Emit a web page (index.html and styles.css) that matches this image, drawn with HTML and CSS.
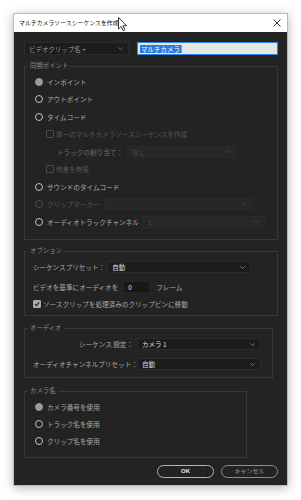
FILE: index.html
```html
<!DOCTYPE html>
<html lang="ja">
<head>
<meta charset="utf-8">
<link rel="stylesheet" href="styles.css">
</head>
<body>
<div class="dialog">
  <div class="titlebar">
    <span class="title">マルチカメラソースシーケンスを作成</span>
    <svg class="close" width="8" height="8" viewBox="0 0 8 8"><path d="M0.5 0.5L7.5 7.5M7.5 0.5L0.5 7.5" stroke="#333" stroke-width="1"/></svg>
    <svg class="cursor" width="10" height="15" viewBox="0 0 10 15"><path d="M0.5 0.5V12L3.2 9.4L5 13.6L6.8 12.8L5 8.8H8.6Z" fill="#fff" stroke="#222" stroke-width="0.9" stroke-linejoin="round"/></svg>
  </div>
  <div class="body">
    <div class="toprow">
      <div class="select select-name"><span>ビデオクリップ名 +</span><svg class="chev" width="5" height="3" viewBox="0 0 5 3"><path d="M0.3 0.3L2.5 2.5L4.7 0.3" fill="none" stroke="#777" stroke-width="0.8"/></svg></div>
      <div class="textinput"><span class="sel">マルチカメラ</span><span class="caret"></span></div>
    </div>

    <fieldset class="group g1">
      <legend>同期ポイント</legend>
      <div class="gbody">
        <div class="row r175"><span class="radio filled"></span><span class="lbl">インポイント</span></div>
        <div class="row r175"><span class="radio"></span><span class="lbl">アウトポイント</span></div>
        <div class="row r175"><span class="radio"></span><span class="lbl">タイムコード</span></div>
        <div class="row r175 ind1"><span class="check dis"></span><span class="lbl dim">単一のマルチカメラソースシーケンスを作成</span></div>
        <div class="row r175 ind2"><span class="lbl mid">トラックの割り当て：</span><div class="select dsel w-track"><span>なし</span><svg class="chev" width="5" height="3" viewBox="0 0 5 3"><path d="M0.3 0.3L2.5 2.5L4.7 0.3" fill="none" stroke="#4a4a4a" stroke-width="0.8"/></svg></div></div>
        <div class="row r175 ind1"><span class="check dis"></span><span class="lbl dim">時差を無視</span></div>
        <div class="row r175"><span class="radio"></span><span class="lbl">サウンドのタイムコード</span></div>
        <div class="row r175"><span class="radio dis"></span><span class="lbl dim">クリップマーカー</span><div class="select dsel w-marker"><span></span><svg class="chev" width="5" height="3" viewBox="0 0 5 3"><path d="M0.3 0.3L2.5 2.5L4.7 0.3" fill="none" stroke="#4a4a4a" stroke-width="0.8"/></svg></div></div>
        <div class="row r175"><span class="radio"></span><span class="lbl">オーディオトラックチャンネル</span><div class="select dsel w-chan"><span>1</span><svg class="chev" width="5" height="3" viewBox="0 0 5 3"><path d="M0.3 0.3L2.5 2.5L4.7 0.3" fill="none" stroke="#4a4a4a" stroke-width="0.8"/></svg></div></div>
      </div>
    </fieldset>

    <fieldset class="group g2">
      <legend>オプション</legend>
      <div class="gbody">
        <div class="row h18"><span class="lbl">シーケンスプリセット：</span><div class="select esel w-preset"><span>自動</span><svg class="chev" width="5" height="3" viewBox="0 0 5 3"><path d="M0.3 0.3L2.5 2.5L4.7 0.3" fill="none" stroke="#888" stroke-width="0.8"/></svg></div></div>
        <div class="row h22"><span class="lbl">ビデオを基準にオーディオを</span><div class="numinput">0</div><span class="lbl frame">フレーム</span></div>
        <div class="row h12"><span class="check on"><svg width="7" height="6" viewBox="0 0 7 6"><path d="M1 3.2L2.8 5L6 1" fill="none" stroke="#222" stroke-width="1.3"/></svg></span><span class="lbl">ソースクリップを処理済みのクリップビンに移動</span></div>
      </div>
    </fieldset>

    <fieldset class="group g3">
      <legend>オーディオ</legend>
      <div class="gbody">
        <div class="row h14"><span class="lbl rlbl">シーケンス 設定：</span><div class="select esel w-audio"><span>カメラ 1</span><svg class="chev" width="5" height="3" viewBox="0 0 5 3"><path d="M0.3 0.3L2.5 2.5L4.7 0.3" fill="none" stroke="#888" stroke-width="0.8"/></svg></div></div>
        <div class="row h14 second"><span class="lbl rlbl">オーディオチャンネルプリセット：</span><div class="select esel w-audio"><span>自動</span><svg class="chev" width="5" height="3" viewBox="0 0 5 3"><path d="M0.3 0.3L2.5 2.5L4.7 0.3" fill="none" stroke="#888" stroke-width="0.8"/></svg></div></div>
      </div>
    </fieldset>

    <fieldset class="group g4">
      <legend>カメラ名</legend>
      <div class="gbody">
        <div class="row h17"><span class="radio filled"></span><span class="lbl">カメラ番号を使用</span></div>
        <div class="row h17"><span class="radio"></span><span class="lbl">トラック名を使用</span></div>
        <div class="row h17"><span class="radio"></span><span class="lbl">クリップ名を使用</span></div>
      </div>
    </fieldset>

    <div class="buttons">
      <div class="btn ok">OK</div>
      <div class="btn cancel">キャンセル</div>
    </div>
  </div>
</div>
</body>
</html>
```

FILE: styles.css
```css
* { box-sizing: border-box; }
html, body { margin: 0; padding: 0; }
body {
  width: 301px;
  height: 500px;
  background: #ffffff;
  font-family: "Noto Sans CJK JP", "Noto Sans", sans-serif;
  overflow: hidden;
}
.dialog {
  margin: 13px 0 0 13px;
  width: 275px;
  height: 473px;
  background: #232323;
  border: 1px solid #b9b9b9;
  box-shadow: 0 2px 10px rgba(0,0,0,0.28);
  display: flex;
  flex-direction: column;
}
.titlebar {
  position: relative;
  height: 18px;
  background: #ffffff;
  display: flex;
  align-items: center;
  padding-left: 5px;
  flex: none;
}
.title {
  font-size: 5.9px;
  color: #111;
  line-height: 8px;
}
.close {
  margin-left: auto;
  margin-right: 6px;
}
.cursor {
  position: absolute;
  left: 104px;
  top: 3px;
}
.body {
  flex: 1;
  display: flex;
  flex-direction: column;
  padding: 10px 9px 0 10px;
}
.toprow {
  display: flex;
  height: 13px;
  gap: 8px;
}
.select {
  display: flex;
  align-items: center;
  height: 12px;
  padding: 0 5px 0 4px;
  background: #1c1c1c;
  border: 1px solid #2b2b2b;
  font-size: 6.5px;
  line-height: 8px;
  color: #9a9a9a;
}
.select span { flex: 1; white-space: nowrap; }
.select .chev { flex: none; }
.select-name { width: 105px; height: 13px; }
.textinput {
  width: 141px;
  height: 13px;
  background: #e6e6e6;
  border: 1px solid #2c86e8;
  display: flex;
  align-items: center;
  padding-left: 2px;
  font-size: 6.5px;
  line-height: 8px;
}
.sel {
  background: #2e7ad9;
  color: #fff;
  padding: 0 1px;
}
.caret {
  width: 1px;
  height: 8px;
  background: #e08a3a;
}
.group {
  margin: 0;
  padding: 0;
  border: 1px solid #383838;
  min-width: 0;
}
.group legend {
  font-size: 6.4px;
  line-height: 8px;
  color: #8a8a8a;
  padding: 0 2px;
  margin-left: 3px;
}
.g1 { margin-top: 7px; width: 254px; }
.g1 .gbody { padding: 3px 0 8.5px 10px; }
.g2 { margin-top: 7px; width: 254px; }
.g2 .gbody { padding: 3px 0 5px 8px; }
.g3 { margin-top: 8px; width: 249px; }
.g3 .gbody { padding: 5px 0 6px 8px; }
.g4 { margin-top: 9px; width: 223px; }
.g4 .gbody { padding: 3.5px 0 7px 10px; }
.row {
  display: flex;
  align-items: center;
  font-size: 6.6px;
  line-height: 8px;
}
.r175 { height: 17.5px; }
.h18 { height: 18px; }
.h22 { height: 22px; }
.h12 { height: 12px; }
.h14 { height: 14px; }
.h17 { height: 17px; }
.g3 .second { margin-top: 6px; }
.ind1 { padding-left: 11px; }
.ind2 { padding-left: 22px; }
.lbl { color: #ababab; white-space: nowrap; }
.lbl.dim { color: #555; }
.lbl.mid { color: #6e6e6e; }
.radio {
  width: 8px;
  height: 8px;
  border-radius: 50%;
  border: 1.3px solid #c2c2c2;
  margin-right: 4px;
  flex: none;
}
.radio.filled { background: #9a9a9a; border-color: #9a9a9a; }
.radio.dis { border-color: #4c4c4c; }
.check {
  width: 8px;
  height: 8px;
  border: 1px solid #5a5a5a;
  border-radius: 1px;
  margin-right: 2px;
  flex: none;
  display: flex;
  align-items: center;
  justify-content: center;
}
.check.dis { border-color: #4a4a4a; }
.check.on { background: #a9a9a9; border-color: #a9a9a9; }
.dsel { background: #272727; border-color: #2a2a2a; color: #4e4e4e; }
.esel { color: #dcdcdc; }
.w-track { width: 109px; margin-left: 4px; }
.w-marker { width: 148px; margin-left: 4px; }
.w-chan { width: 122px; margin-left: 4px; }
.w-preset { width: 144px; margin-left: 2px; }
.numinput {
  width: 27px;
  height: 12px;
  background: #171717;
  border: 1px solid #262626;
  margin-left: 5px;
  color: #e0e0e0;
  font-size: 6.5px;
  line-height: 8px;
  padding-left: 4px;
  display: flex;
  align-items: center;
}
.frame { margin-left: 6px; }
.rlbl { width: 100px; text-align: right; }
.w-audio { width: 124px; margin-left: 4px; }
.buttons {
  margin-top: 7px;
  display: flex;
  justify-content: flex-end;
  gap: 7px;
  width: 254px;
}
.btn {
  width: 57px;
  height: 13px;
  border: 1px solid #b5b5b5;
  border-radius: 7px;
  display: flex;
  align-items: center;
  justify-content: center;
  font-size: 6px;
  line-height: 8px;
}
.btn.ok { color: #e8e8e8; font-weight: bold; font-family: "Liberation Sans", sans-serif; }
.btn.cancel { color: #9a9a9a; border-color: #8d8d8d; }
```
